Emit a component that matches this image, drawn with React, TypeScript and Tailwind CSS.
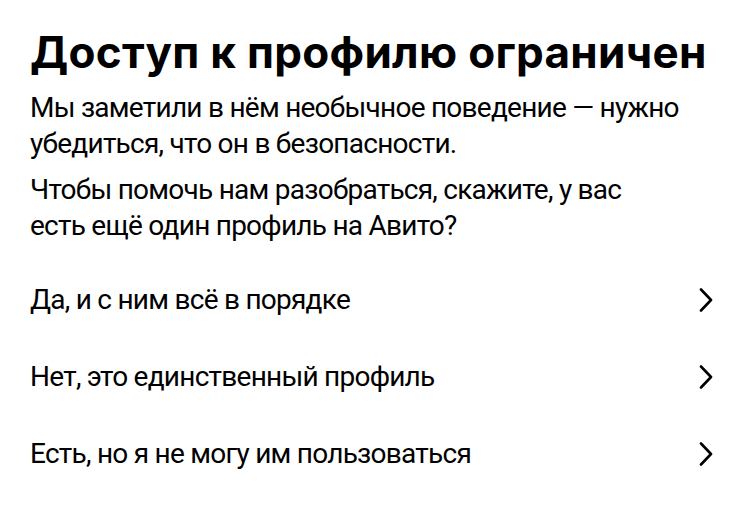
const options = [
  'Да, и с ним всё в порядке',
  'Нет, это единственный профиль',
  'Есть, но я не могу им пользоваться',
];

function Chevron() {
  return (
    <svg width="14" height="24" viewBox="0 0 14 24" fill="none" className="mr-[-3px] shrink-0">
      <path d="M2 1.5 12 12 2 22.5" stroke="currentColor" strokeWidth="2.6" strokeLinecap="round" strokeLinejoin="round" />
    </svg>
  );
}

export default function App() {
  return (
    <div
      className="min-h-[520px] w-[740px] bg-white pl-[30px] pr-[30px] pt-[27px] text-black"
      style={{ fontFamily: 'Roboto, "Noto Sans", sans-serif' }}
    >
      <h1
        className="text-[44px] font-bold leading-[50px] tracking-[0.3px]"
        style={{ fontFamily: 'Inter, Roboto, sans-serif' }}
      >
        Доступ к профилю ограничен
      </h1>
      <p className="mt-[13px] text-[28px] leading-[36px] tracking-[-0.75px]">
        Мы заметили в нём необычное поведение — нужно
        <br />
        убедиться, что он в безопасности.
      </p>
      <p className="mt-[10px] text-[28px] leading-[36px] tracking-[-0.75px]">
        Чтобы помочь нам разобраться, скажите, у вас
        <br />
        есть ещё один профиль на Авито?
      </p>
      <div className="mt-[17px] flex flex-col">
        {options.map((option) => (
          <button
            key={option}
            type="button"
            className="flex h-[77px] items-center justify-between text-left text-[28px] tracking-[-0.75px]"
          >
            <span>{option}</span>
            <Chevron />
          </button>
        ))}
      </div>
    </div>
  );
}
